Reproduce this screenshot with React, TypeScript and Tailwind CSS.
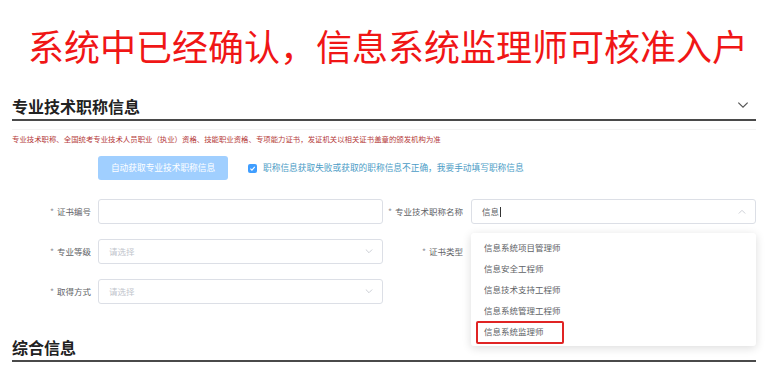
import React from "react";

const cjk = { fontFamily: '"Noto Sans CJK SC", "Noto Sans", sans-serif' };

function Chevron({ up = false, className = "" }: { up?: boolean; className?: string }) {
  return (
    <svg viewBox="0 0 10 6" className={className} fill="none" stroke="currentColor" strokeWidth="1">
      <path d={up ? "M1 5.5 L5 1.5 L9 5.5" : "M1 0.5 L5 4.5 L9 0.5"} />
    </svg>
  );
}

function Label({ text, width }: { text: string; width: string }) {
  return (
    <div className={`${width} shrink-0 text-right text-[8.5px] text-[#606266]`}>
      <span className="mr-[3px] text-[#909399]">*</span>
      {text}
    </div>
  );
}

function SelectBox({ placeholder }: { placeholder?: string }) {
  return (
    <div className="flex h-[25px] w-[285px] items-center justify-between rounded-[3px] border border-[#dcdfe6] pl-[10px] pr-[9px]">
      <span className="text-[8.5px] text-[#c0c4cc]">{placeholder}</span>
      <Chevron className="h-[5px] w-[8px] text-[#c0c4cc]" />
    </div>
  );
}

function SectionHeading({ title, chevron = false }: { title: string; chevron?: boolean }) {
  return (
    <div className="flex h-[31px] items-center justify-between border-b-2 border-[#4a4a4a] pt-[2px]">
      <span className="text-[16px] font-bold text-[#222]">{title}</span>
      {chevron ? <Chevron className="mr-[7px] h-[7px] w-[12px] text-[#555]" /> : null}
    </div>
  );
}

const options = [
  "信息系统项目管理师",
  "信息安全工程师",
  "信息技术支持工程师",
  "信息系统管理工程师",
  "信息系统监理师",
];

export default function App() {
  return (
    <div className="relative h-[365px] w-[776px] overflow-hidden bg-white" style={cjk}>
      <div className="flex h-[90px] justify-center pt-[24px]">
        <h1 className="text-[36px] font-normal leading-[42px] text-[#f01616]">
          系统中已经确认，信息系统监理师可核准入户
        </h1>
      </div>

      <div className="pl-[12px] pr-[20px]">
        <SectionHeading title="专业技术职称信息" chevron />
        <div className="h-[9px] border-b border-[#f4f4f4]" />
        <p className="mt-[4px] text-[7.4px] leading-[10px] text-[#b53a3a]">
          专业技术职称、全国统考专业技术人员职业（执业）资格、技能职业资格、专项能力证书，发证机关以相关证书盖章的颁发机构为准
        </p>

        <div className="mt-[12px] flex items-center pl-[86px]">
          <button className="h-[24px] w-[130px] rounded-[3px] bg-[#a0cfff] text-[8.7px] text-white">
            自动获取专业技术职称信息
          </button>
          <span className="ml-[20px] flex h-[9px] w-[9px] items-center justify-center rounded-[2px] bg-[#409eff]">
            <svg viewBox="0 0 10 10" className="h-[7px] w-[7px]" fill="none" stroke="white" strokeWidth="1.6">
              <path d="M2 5.2 L4.2 7.3 L8.2 2.8" />
            </svg>
          </span>
          <span className="ml-[6px] text-[8.7px] text-[#4b9cc6]">
            职称信息获取失败或获取的职称信息不正确，我要手动填写职称信息
          </span>
        </div>

        <div className="mt-[19px] flex flex-col gap-[15px]">
          <div className="flex h-[25px] items-center">
            <Label text="证书编号" width="w-[79px]" />
            <div className="ml-[7px] h-[25px] w-[285px] rounded-[3px] border border-[#dcdfe6]" />
            <Label text="专业技术职称名称" width="w-[80px]" />
            <div className="ml-[8px] flex h-[25px] w-[285px] items-center justify-between rounded-[3px] border border-[#dcdfe6] pl-[10px] pr-[9px]">
              <span className="flex items-center text-[8.5px] text-[#606266]">
                信息
                <span className="ml-[1px] inline-block h-[10px] w-px bg-[#333]" />
              </span>
              <Chevron up className="h-[5px] w-[8px] text-[#c0c4cc]" />
            </div>
          </div>
          <div className="flex h-[25px] items-center">
            <Label text="专业等级" width="w-[79px]" />
            <div className="ml-[7px]">
              <SelectBox placeholder="请选择" />
            </div>
            <Label text="证书类型" width="w-[80px]" />
            <div className="ml-[8px]">
              <SelectBox />
            </div>
          </div>
          <div className="flex h-[25px] items-center">
            <Label text="取得方式" width="w-[79px]" />
            <div className="ml-[7px]">
              <SelectBox placeholder="请选择" />
            </div>
          </div>
        </div>

        <div className="mt-[27px]">
          <SectionHeading title="综合信息" />
        </div>
      </div>

      <div className="absolute left-[471px] top-[233px] w-[285px] rounded-[3px] bg-white py-[4px] shadow-[0_2px_10px_rgba(0,0,0,0.14)]">
        {options.map((o) => (
          <div key={o} className="flex h-[21px] items-center pl-[13px] text-[8.5px] text-[#606266]">
            {o}
          </div>
        ))}
      </div>
      <div className="absolute left-[476px] top-[321px] h-[23px] w-[88px] rounded-[2px] border-2 border-[#e02424]" />
    </div>
  );
}
